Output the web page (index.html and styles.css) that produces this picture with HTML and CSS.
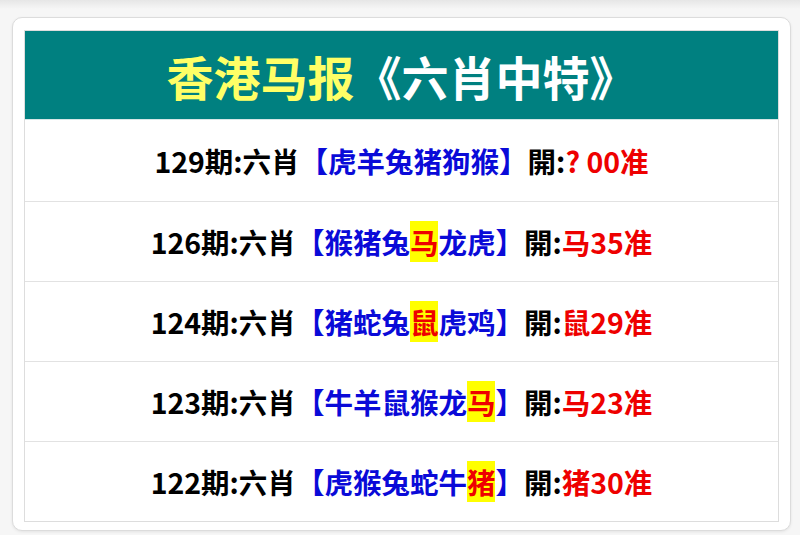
FILE: index.html
```html
<!DOCTYPE html>
<html lang="zh">

<head>
    <meta charset="UTF-8">
    <meta name="viewport" content="width=device-width, initial-scale=1.0">
    <title>香港马报</title>
    <link rel="stylesheet" href="styles.css">
</head>

<body>
    <div class="card">
        <div class="board">
            <div class="board-head">
                <span class="title-a">香港马报</span><span class="title-b">《六肖中特》</span>
            </div>

            <div class="row">
                <span class="qi">129期:六肖</span><span class="pick">【虎羊兔猪狗猴】</span><span class="qi">開:</span><span class="hit">? 00准</span>
            </div>
            <div class="row">
                <span class="qi">126期:六肖</span><span class="pick">【猴猪兔<em class="mark">马</em>龙虎】</span><span class="qi">開:</span><span class="hit">马35准</span>
            </div>
            <div class="row">
                <span class="qi">124期:六肖</span><span class="pick">【猪蛇兔<em class="mark">鼠</em>虎鸡】</span><span class="qi">開:</span><span class="hit">鼠29准</span>
            </div>
            <div class="row">
                <span class="qi">123期:六肖</span><span class="pick">【牛羊鼠猴龙<em class="mark">马</em>】</span><span class="qi">開:</span><span class="hit">马23准</span>
            </div>
            <div class="row">
                <span class="qi">122期:六肖</span><span class="pick">【虎猴兔蛇牛<em class="mark">猪</em>】</span><span class="qi">開:</span><span class="hit">猪30准</span>
            </div>
        </div>
    </div>
</body>

</html>
```

FILE: styles.css
```css
body {
    margin: 0;
    padding: 17px 9px 7px 12px;
    font-family: "Noto Sans CJK SC", "Noto Sans", sans-serif;
    background: linear-gradient(#e6e6e6, #f6f6f6 9px);
}

.card {
    background-color: #fff;
    border: 1px solid #dcdcdc;
    border-radius: 10px;
    box-shadow: 0 1px 3px rgba(0, 0, 0, 0.08);
    padding: 12px 11px 8px 11px;
}

.board {
    border: 1px solid #dddddd;
}

.board-head {
    background-color: #008080;
    height: 88px;
    display: flex;
    align-items: center;
    justify-content: center;
    font-size: 47px;
    font-weight: bold;
    border-bottom: 1px solid #d6e6e6;
}

.title-a {
    color: #ffff66;
}

.title-b {
    color: #fff;
}

.row {
    height: 79px;
    display: flex;
    align-items: center;
    justify-content: center;
    font-size: 28.5px;
    font-weight: bold;
    border-top: 1px solid #e2e2e2;
}

.row:nth-child(2) {
    border-top: none;
    height: 81px;
}

.qi {
    color: #000;
}

.pick {
    color: #0a0ad8;
}

.hit {
    color: #ee0000;
}

.mark {
    font-style: normal;
    color: #ee0000;
    background-color: #ffff00;
}
```
